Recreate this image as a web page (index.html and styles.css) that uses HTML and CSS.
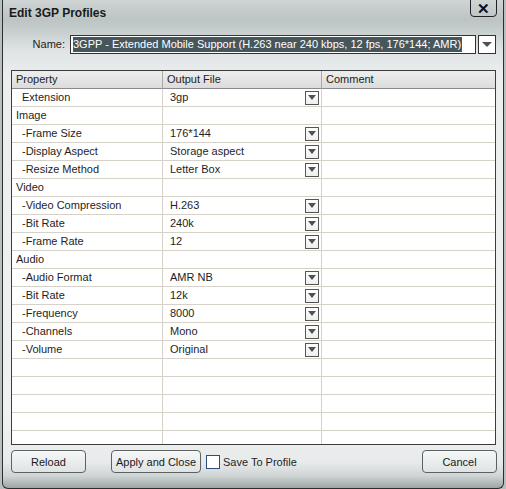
FILE: index.html
```html
<!DOCTYPE html>
<html>
<head>
<meta charset="utf-8">
<link rel="stylesheet" href="styles.css">
</head>
<body>
<div class="win">
  <div class="titlebar">
    <div class="title">Edit 3GP Profiles</div>
    <div class="close">✕</div>
  </div>
  <div class="namerow">
    <div class="namelabel">Name:</div>
    <div class="nameinput"><span class="sel">3GPP - Extended Mobile Support (H.263 near 240 kbps, 12 fps, 176*144; AMR)</span></div>
    <div class="namedrop"><span class="tri"></span></div>
  </div>
  <div class="grid">
    <div class="row head"><div class="c1">Property</div><div class="c2">Output File</div><div class="c3">Comment</div></div>
    <div class="row"><div class="c1 sub">Extension</div><div class="c2 val">3gp<span class="dd"><span class="tri"></span></span></div><div class="c3"></div></div>
    <div class="row"><div class="c1">Image</div><div class="c2"></div><div class="c3"></div></div>
    <div class="row"><div class="c1 sub">-Frame Size</div><div class="c2 val">176*144<span class="dd"><span class="tri"></span></span></div><div class="c3"></div></div>
    <div class="row"><div class="c1 sub">-Display Aspect</div><div class="c2 val">Storage aspect<span class="dd"><span class="tri"></span></span></div><div class="c3"></div></div>
    <div class="row"><div class="c1 sub">-Resize Method</div><div class="c2 val">Letter Box<span class="dd"><span class="tri"></span></span></div><div class="c3"></div></div>
    <div class="row"><div class="c1">Video</div><div class="c2"></div><div class="c3"></div></div>
    <div class="row"><div class="c1 sub">-Video Compression</div><div class="c2 val">H.263<span class="dd"><span class="tri"></span></span></div><div class="c3"></div></div>
    <div class="row"><div class="c1 sub">-Bit Rate</div><div class="c2 val">240k<span class="dd"><span class="tri"></span></span></div><div class="c3"></div></div>
    <div class="row"><div class="c1 sub">-Frame Rate</div><div class="c2 val">12<span class="dd"><span class="tri"></span></span></div><div class="c3"></div></div>
    <div class="row"><div class="c1">Audio</div><div class="c2"></div><div class="c3"></div></div>
    <div class="row"><div class="c1 sub">-Audio Format</div><div class="c2 val">AMR NB<span class="dd"><span class="tri"></span></span></div><div class="c3"></div></div>
    <div class="row"><div class="c1 sub">-Bit Rate</div><div class="c2 val">12k<span class="dd"><span class="tri"></span></span></div><div class="c3"></div></div>
    <div class="row"><div class="c1 sub">-Frequency</div><div class="c2 val">8000<span class="dd"><span class="tri"></span></span></div><div class="c3"></div></div>
    <div class="row"><div class="c1 sub">-Channels</div><div class="c2 val">Mono<span class="dd"><span class="tri"></span></span></div><div class="c3"></div></div>
    <div class="row"><div class="c1 sub">-Volume</div><div class="c2 val">Original<span class="dd"><span class="tri"></span></span></div><div class="c3"></div></div>
    <div class="row"><div class="c1"></div><div class="c2"></div><div class="c3"></div></div>
    <div class="row"><div class="c1"></div><div class="c2"></div><div class="c3"></div></div>
    <div class="row"><div class="c1"></div><div class="c2"></div><div class="c3"></div></div>
    <div class="row"><div class="c1"></div><div class="c2"></div><div class="c3"></div></div>
    <div class="row"><div class="c1"></div><div class="c2"></div><div class="c3"></div></div>
  </div>
  <div class="buttons">
    <div class="btn reload">Reload</div>
    <div class="btn apply">Apply and Close</div>
    <div class="chk"></div>
    <div class="chklabel">Save To Profile</div>
    <div class="btn cancel">Cancel</div>
  </div>
</div>
</body>
</html>
```
FILE: styles.css
```css
html, body {
  margin: 0;
  padding: 0;
  background: #b9bebe;
  font-family: "Liberation Sans", Arial, sans-serif;
  font-size: 11px;
  color: #1e1e1e;
}
* { box-sizing: border-box; }

.win {
  margin-left: 2px;
  width: 502px;
  height: 489px;
  border: 1px solid #2b2f2f;
  border-top: none;
  border-radius: 0 0 6px 6px;
  display: flex;
  flex-direction: column;
  overflow: hidden;
  background: linear-gradient(to bottom,
    #cfd4d4 0px, #bcc4c4 20px, #c6cdcd 30px, #dfe3e3 50px,
    #eceeee 75px, #f0f1f1 420px, #e8ebeb 462px, #cfd4d4 476px, #9da5a5 488px);
}

.titlebar {
  height: 27px;
  display: flex;
  align-items: flex-start;
  justify-content: space-between;
}
.title {
  font-weight: bold;
  font-size: 12px;
  padding-left: 6px;
  padding-top: 6px;
  color: #1a1a1a;
}
.close {
  width: 27px;
  height: 18px;
  margin-right: 6px;
  margin-top: -1px;
  border: 1px solid #222;
  border-radius: 0 0 4px 4px;
  display: flex;
  align-items: center;
  justify-content: center;
  font-size: 15px;
  font-weight: bold;
  color: #111;
  line-height: 1;
}

.namerow {
  margin-top: 8px;
  height: 19px;
  display: flex;
  align-items: stretch;
}
.namelabel {
  width: 62px;
  text-align: right;
  line-height: 19px;
  color: #222;
}
.nameinput {
  margin-left: 5px;
  width: 406px;
  border: 1px solid #333;
  background: #fff;
  padding: 1px 2px;
  display: flex;
  align-items: center;
  overflow: hidden;
  white-space: nowrap;
}
.sel {
  background: #46565b;
  color: #fff;
  line-height: 15px;
  padding-right: 1px;
}
.namedrop {
  margin-left: 2px;
  width: 18px;
  border: 1px solid #333;
  background: #fff;
  display: flex;
  align-items: center;
  justify-content: center;
}

.tri {
  width: 0;
  height: 0;
  border-left: 5px solid transparent;
  border-right: 5px solid transparent;
  border-top: 5px solid #4e5252;
}

.grid {
  margin-top: 16px;
  margin-left: 8px;
  width: 485px;
  height: 375px;
  border: 1px solid #3a3d3d;
  background: #fff;
  overflow: hidden;
}
.row {
  display: flex;
  height: 18px;
}
.row > div {
  height: 18px;
  border-bottom: 1px solid #d6d2ca;
  border-right: 1px solid #d6d2ca;
  line-height: 17px;
  white-space: nowrap;
  overflow: hidden;
}
.c1 { width: 151px; padding-left: 4px; }
.c2 { width: 159px; padding-left: 4px; }
.c3 { width: 173px; border-right: none !important; padding-left: 4px; }
.sub { padding-left: 10px; }
.val {
  padding-left: 7px !important;
  display: flex;
  justify-content: space-between;
  align-items: center;
}
.dd {
  width: 14px;
  height: 14px;
  margin-right: 2px;
  border: 1px solid #555;
  background: linear-gradient(#ffffff, #eeeeee);
  display: flex;
  align-items: center;
  justify-content: center;
}
.dd .tri {
  border-left-width: 4px;
  border-right-width: 4px;
  border-top-width: 5px;
}

.head > div {
  background: linear-gradient(#eeeeee, #dcdcdc);
  border-bottom: 1px solid #8a8a8a;
  border-right: 1px solid #a9a9a9;
  color: #222;
}

.buttons {
  margin-top: 5px;
  display: flex;
  align-items: center;
  height: 23px;
}
.btn {
  height: 23px;
  border: 1px solid #5c6262;
  border-radius: 4px;
  background: linear-gradient(#f6f8f8, #dfe3e3);
  display: flex;
  align-items: center;
  justify-content: center;
  color: #1a1a1a;
}
.reload { width: 75px; margin-left: 8px; }
.apply { width: 90px; margin-left: 25px; }
.chk {
  width: 14px;
  height: 14px;
  margin-left: 5px;
  border: 1px solid #2d4f7c;
  background: #fff;
}
.chklabel { margin-left: 3px; }
.cancel { width: 75px; margin-left: auto; margin-right: 6px; }
```
